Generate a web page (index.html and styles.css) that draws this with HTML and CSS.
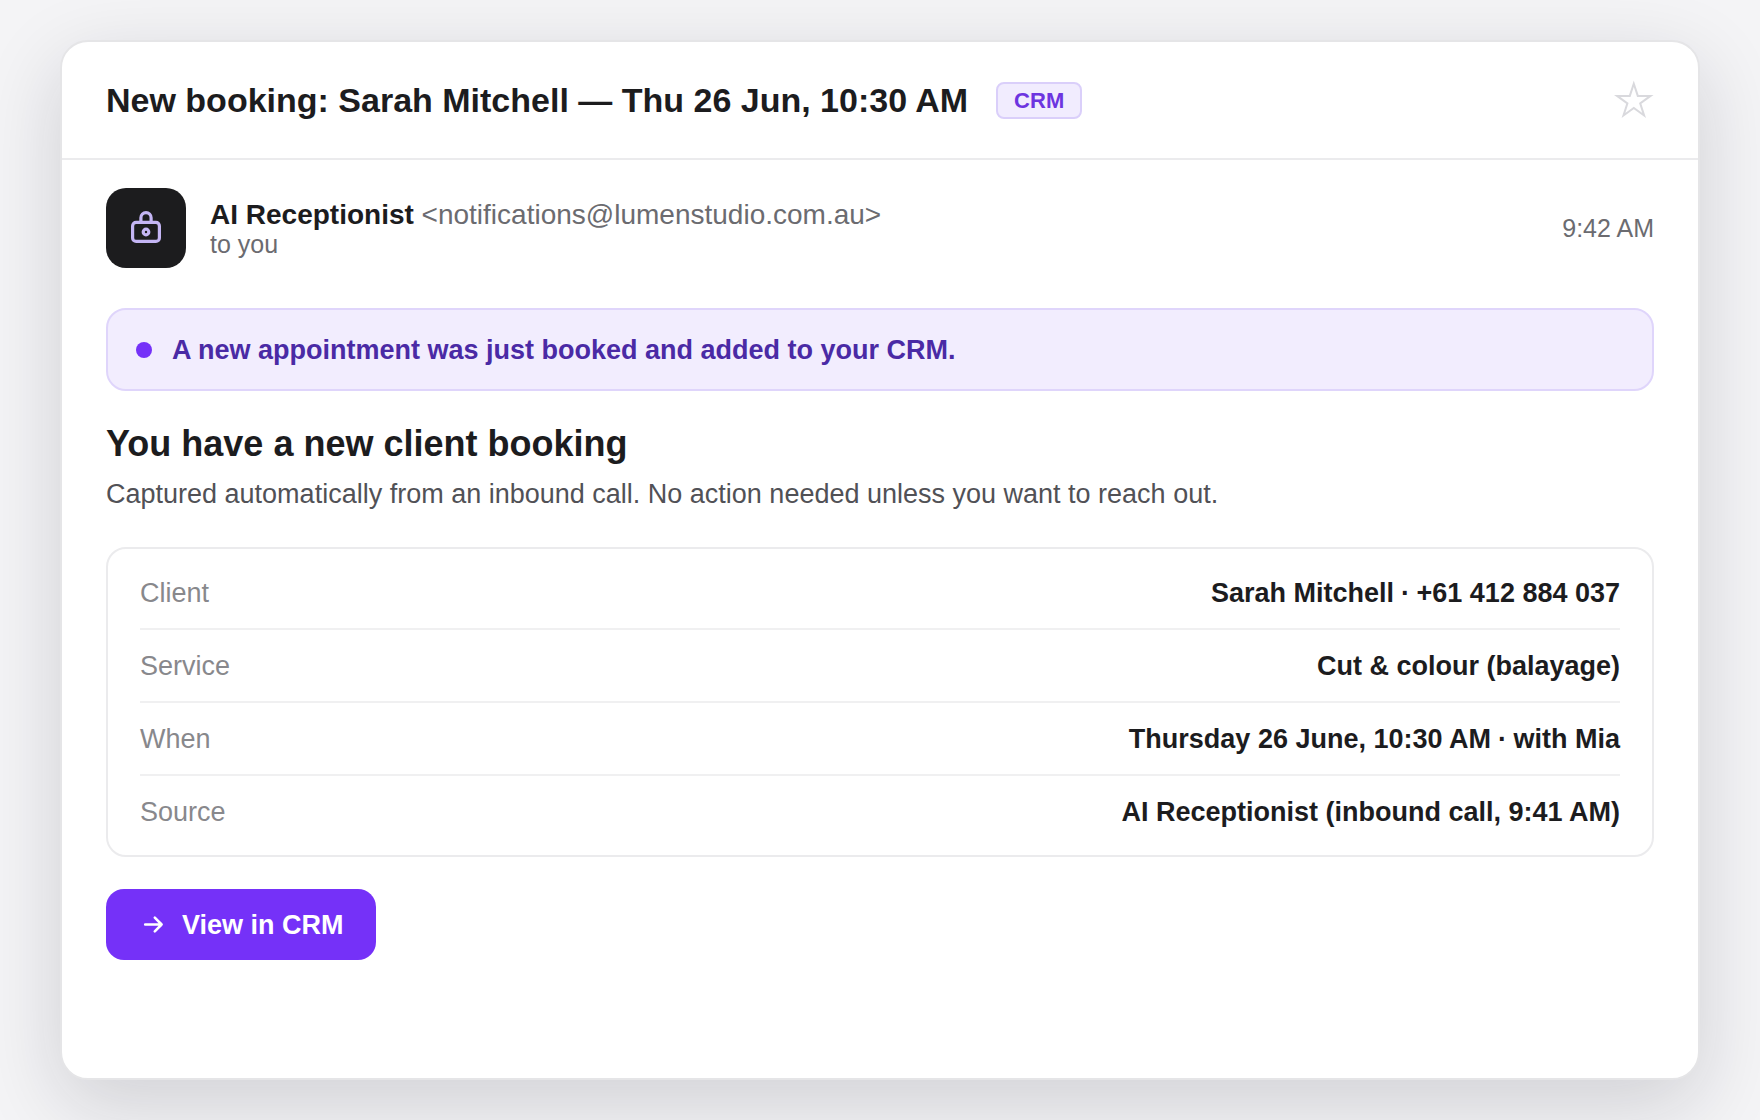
FILE: index.html
```html
<!DOCTYPE html>
<html lang="en">
<head>
<meta charset="utf-8">
<title>New booking</title>
<link rel="stylesheet" href="styles.css">
</head>
<body>
<main class="mail">
  <header class="mail-header">
    <h1 class="subject">New booking: Sarah Mitchell — Thu 26 Jun, 10:30 AM</h1>
    <span class="tag">CRM</span>
    <svg class="star" viewBox="0 0 38 38" aria-hidden="true"><path d="M17.8 2.8 L21.8 14.9 H34.5 L24.2 22.4 L28.1 34.5 L17.8 27 L7.5 34.5 L11.4 22.4 L1.1 14.9 H13.8 Z"/></svg>
  </header>
  <div class="mail-body">
    <div class="sender">
      <div class="avatar">
        <svg class="lock" viewBox="0 0 40 40" aria-hidden="true">
          <rect x="6.6" y="14.4" width="26.8" height="19" rx="3.5"/>
          <path d="M14.9 14.4 V9.7 a5.1 5.1 0 0 1 10.2 0 V14.4"/>
          <circle cx="20" cy="24" r="2.8"/>
        </svg>
      </div>
      <div class="from">
        <div class="from-line"><b>AI Receptionist</b> <span class="address">&lt;notifications@lumenstudio.com.au&gt;</span></div>
        <div class="to">to you</div>
      </div>
      <time class="time">9:42 AM</time>
    </div>
    <div class="banner"><span class="dot"></span><span class="banner-text">A new appointment was just booked and added to your CRM.</span></div>
    <h2 class="heading">You have a new client booking</h2>
    <p class="lead">Captured automatically from an inbound call. No action needed unless you want to reach out.</p>
    <dl class="details">
      <div class="row"><dt>Client</dt><dd>Sarah Mitchell <span class="sep">·</span> +61 412 884 037</dd></div>
      <div class="row"><dt>Service</dt><dd>Cut &amp; colour (balayage)</dd></div>
      <div class="row"><dt>When</dt><dd>Thursday 26 June, 10:30 AM <span class="sep">·</span> with Mia</dd></div>
      <div class="row"><dt>Source</dt><dd>AI Receptionist (inbound call, 9:41 AM)</dd></div>
    </dl>
    <a class="button" href="#">
      <svg class="arrow" viewBox="0 0 26 26" aria-hidden="true"><path d="M7.2 12.5 H23.6 M16.8 5.7 L23.6 12.5 L16.8 19.3"/></svg>
      <span class="button-label">View in CRM</span>
    </a>
  </div>
</main>
</body>
</html>
```
FILE: styles.css
```css
* { box-sizing: border-box; }
body {
  margin: 0;
  height: 1120px;
  padding: 40px 60px;
  background: #f4f4f6;
  font-family: "Liberation Sans", Arial, sans-serif;
  color: #1c1c1e;
  overflow: hidden;
}
.mail {
  height: 1040px;
  background: #fff;
  border: 2px solid #e5e5e7;
  border-radius: 28px;
  box-shadow: 0 24px 80px rgba(20, 20, 40, 0.16);
}
.mail-header {
  display: flex;
  align-items: center;
  height: 118px;
  padding: 0 44px;
  border-bottom: 2px solid #ebebed;
}
.subject { margin: 0; font-size: 34px; line-height: 40px; font-weight: 700; }
.tag {
  height: 37px;
  margin-left: 28px;
  padding: 0 16px;
  border: 2px solid #dacffa;
  border-radius: 8px;
  background: #f1ecfe;
  color: #6d35e0;
  font-size: 22px;
  line-height: 33px;
  font-weight: 700;
}
.star { width: 38px; height: 38px; margin-left: auto; fill: none; stroke: #d9d9dd; stroke-width: 2; overflow: visible; }
.mail-body { padding: 28px 44px; }
.sender { display: flex; align-items: center; height: 80px; }
.avatar {
  display: grid;
  place-items: center;
  width: 80px;
  height: 80px;
  margin-right: 24px;
  border-radius: 20px;
  background: #1c1c1e;
}
.lock { width: 40px; height: 40px; fill: none; stroke: #c4b5f4; stroke-width: 3.2; }
.from { padding-top: 2px; }
.from-line { font-size: 28px; line-height: 31px; }
.address { color: #6b6b70; }
.to { font-size: 25px; line-height: 29px; color: #6b6b70; }
.time { margin-left: auto; padding-top: 1px; font-size: 25px; color: #6b6b70; }
.banner {
  display: flex;
  align-items: center;
  gap: 20px;
  height: 83px;
  margin-top: 40px;
  padding: 0 28px;
  border: 2px solid #dfd5fb;
  border-radius: 20px;
  background: #f2edfe;
  color: #4a2aa5;
  font-size: 27px;
  font-weight: 700;
}
.banner-text { padding-top: 2px; }
.dot { width: 16px; height: 16px; border-radius: 50%; background: #7531f8; }
.heading { margin: 32px 0 0; font-size: 36px; line-height: 42px; }
.lead { margin: 12px 0 0; font-size: 27px; line-height: 34px; color: #515156; }
.details {
  margin: 36px 0 0;
  padding: 8px 32px;
  border: 2px solid #ebebed;
  border-radius: 20px;
  font-size: 27px;
}
.row {
  display: flex;
  align-items: center;
  justify-content: space-between;
  height: 73px;
  padding-top: 2px;
  border-bottom: 2px solid #f0f0f1;
}
.row:last-child { height: 71px; border-bottom: 0; }
.row dt { color: #88888c; }
.row dd { margin: 0; font-weight: 700; }
.sep { margin: 0 -1px 0 -0.5px; }
.button {
  display: inline-flex;
  align-items: center;
  height: 71px;
  margin-top: 32px;
  padding: 0 32px;
  border-radius: 18px;
  background: #7531f8;
  color: #fff;
  font-size: 27px;
  font-weight: 700;
  text-decoration: none;
}
.button-label { padding-top: 2px; }
.arrow {
  width: 26px;
  height: 26px;
  margin-right: 18px;
  fill: none;
  stroke: #fff;
  stroke-width: 2.6;
  stroke-linecap: round;
  stroke-linejoin: round;
}
```
